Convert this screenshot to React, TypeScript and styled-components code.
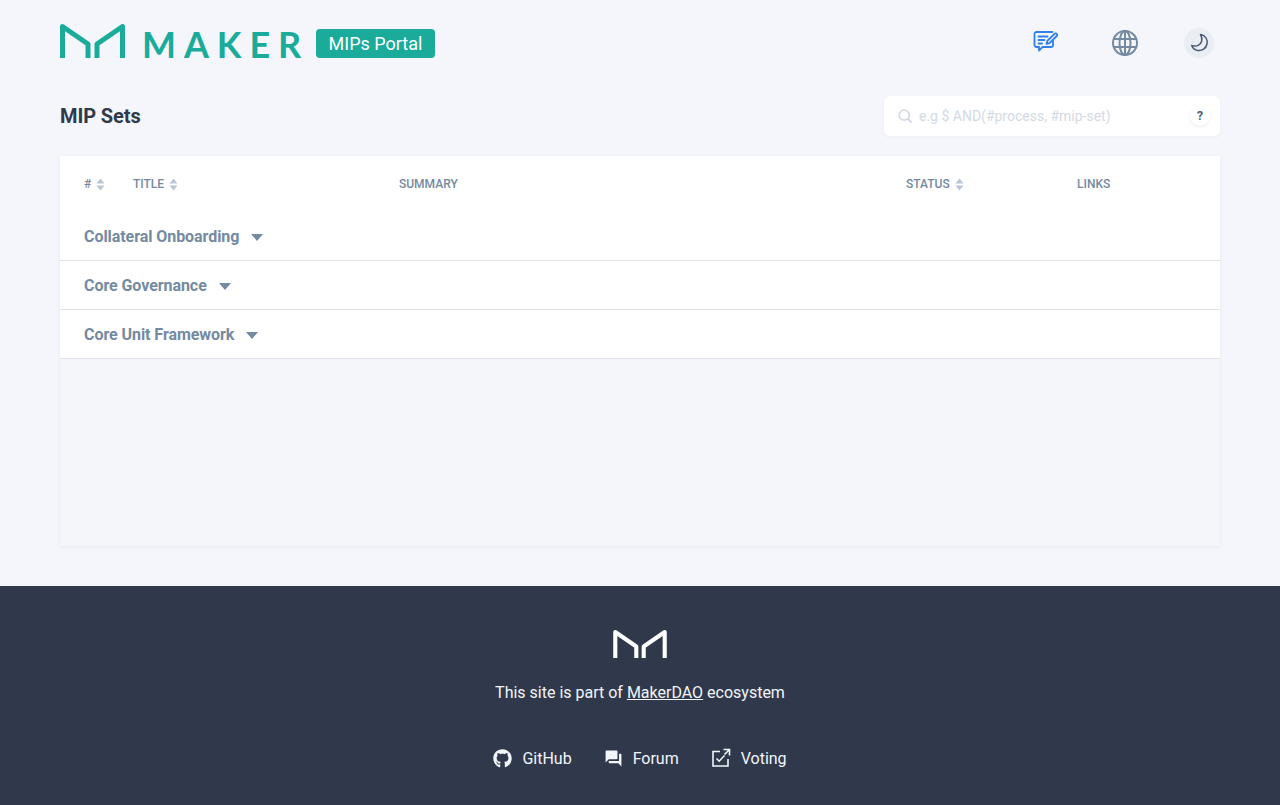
import React from 'react'
import styled, { createGlobalStyle } from 'styled-components'
import { FaGithub } from 'react-icons/fa'
import { MdForum } from 'react-icons/md'

const GlobalStyle = createGlobalStyle`
  html, body {
    margin: 0;
    padding: 0;
    background: #f4f6fb;
    font-family: Roboto, "Liberation Sans", sans-serif;
  }
  * { box-sizing: border-box; }
`

const Page = styled.div`
  width: 1280px;
  height: 805px;
  overflow: hidden;
  display: flex;
  flex-direction: column;
`

const Main = styled.main`
  height: 586px;
  padding: 24px 60px 40px;
  display: flex;
  flex-direction: column;
`

const Header = styled.header`
  height: 34px;
  display: flex;
  align-items: center;
  justify-content: space-between;
`

const Brand = styled.div`
  display: flex;
  align-items: center;
`

const WordMark = styled.span`
  width: 174px;
  margin-left: 17px;
  padding-top: 3px;
  height: 34px;
  font-family: Lato, sans-serif;
  font-size: 36px;
  line-height: 34px;
  font-weight: 700;
  letter-spacing: 7.9px;
  white-space: nowrap;
  color: #1aab9b;
`

const PortalBadge = styled.span`
  margin-top: 5px;
  width: 119px;
  height: 29px;
  border-radius: 4px;
  background: #1aab9b;
  color: #fff;
  font-size: 18px;
  line-height: 29px;
  text-align: center;
`

const HeaderIcons = styled.div`
  display: flex;
  align-items: center;
  margin-top: 4px;
  margin-right: 6px;
`

const IconSlot = styled.div<{ $width: number; $offset?: number; $round?: boolean }>`
  width: ${p => p.$width}px;
  height: 30px;
  margin-left: ${p => p.$offset ?? 0}px;
  display: flex;
  align-items: center;
  justify-content: center;
  border-radius: 50%;
  background: ${p => (p.$round ? '#e9edf4' : 'transparent')};
`

const TitleRow = styled.div`
  margin-top: 38px;
  height: 40px;
  display: flex;
  align-items: center;
  justify-content: space-between;
`

const Title = styled.h1`
  margin: 0;
  font-size: 20px;
  font-weight: 700;
  color: #2f3a4d;
  letter-spacing: -0.1px;
`

const SearchBox = styled.div`
  width: 336px;
  height: 40px;
  padding: 0 10px 0 14px;
  display: flex;
  align-items: center;
  background: #fff;
  border-radius: 6px;
  box-shadow: 0 1px 3px rgba(190, 200, 220, 0.18);
`

const Placeholder = styled.span`
  flex: 1;
  margin-left: 7px;
  font-size: 14px;
  color: #d3dae5;
`

const HelpButton = styled.span`
  width: 20px;
  height: 20px;
  border-radius: 50%;
  box-shadow: 0 1px 3px rgba(190, 200, 220, 0.35);
  font-size: 12px;
  font-weight: 700;
  line-height: 20px;
  text-align: center;
  color: #4a5872;
`

const TableCard = styled.section`
  margin-top: 20px;
  height: 390px;
  background: #f5f6fa;
  box-shadow: 0 1px 4px rgba(190, 200, 220, 0.3);
  border-radius: 2px;
`

const HeadRow = styled.div`
  height: 56px;
  padding-left: 24px;
  display: grid;
  grid-template-columns: 49px 266px 507px 171px 1fr;
  align-items: center;
  background: #fff;
`

const HeadCell = styled.div`
  display: flex;
  align-items: center;
  gap: 5px;
  font-size: 12px;
  font-weight: 500;
  color: #748aa1;
`

const GroupRow = styled.div`
  height: 49px;
  padding: 1px 24px 0;
  display: flex;
  align-items: center;
  gap: 12px;
  background: #fff;
  border-bottom: 1px solid #dfe2e6;
`

const GroupName = styled.span`
  font-size: 16px;
  font-weight: 700;
  letter-spacing: -0.06px;
  color: #748aa1;
`

const Caret = styled.span`
  width: 0;
  height: 0;
  margin-top: 1px;
  border-left: 6px solid transparent;
  border-right: 6px solid transparent;
  border-top: 7px solid #748aa1;
`

const Footer = styled.footer`
  height: 219px;
  padding-top: 44px;
  display: flex;
  flex-direction: column;
  align-items: center;
  background: #30394c;
  color: #fff;
`

const FooterNote = styled.p`
  margin: 25px 0 0;
  height: 20px;
  font-size: 16px;
  line-height: 20px;
  color: #f2f5fa;

  a {
    color: inherit;
    text-decoration: underline;
  }
`

const FooterLinks = styled.nav`
  margin-top: 45px;
  display: flex;
  align-items: center;
  gap: 32px;
`

const FooterLink = styled.a`
  display: flex;
  align-items: center;
  gap: 10px;
  font-size: 16px;
  color: #f2f5fa;
`

const MakerMark = ({ width, height, color }: { width: number; height: number; color: string }) => (
  <svg width={width} height={height} viewBox="0 0 65 34" fill="none">
    <path
      d="M2.500 34V2.500L28 20V34M37 34V20L62.500 2.500V34"
      stroke={color}
      strokeWidth="5"
      strokeLinejoin="round"
    />
  </svg>
)

const SortIcon = () => (
  <svg width="9" height="13" viewBox="0 0 9 13" fill="#b8c5d3">
    <path d="M4.500 0.500L8.500 5.500H0.500Z" />
    <path d="M4.500 12.500L8.500 7.500H0.500Z" />
  </svg>
)

const NoteIcon = () => (
  <svg width="26" height="24" viewBox="0 1 26 24" fill="none" stroke="#2f80ed" strokeWidth="1.800" strokeLinecap="round" strokeLinejoin="round">
    <path d="M20 10V15a2 2 0 0 1-2 2H9.500L6 20.500V17H3.500a2 2 0 0 1-2-2V4a2 2 0 0 1 2-2H19.500" />
    <path d="M5.500 6.500h9M5.500 10h6M5.500 13.500h3.500" />
    <path d="M13.500 14l.8-3L21.500 3.800a1.400 1.400 0 0 1 2.200 2.200L16.500 13.200Z" />
  </svg>
)

const GlobeIcon = () => (
  <svg width="28" height="28" viewBox="0 0 28 28" fill="none" stroke="#748aa1" strokeWidth="2">
    <circle cx="14" cy="14" r="12" />
    <ellipse cx="14" cy="14" rx="5.500" ry="12" />
    <path d="M14 2v24M3 10h22M3 18h22" />
  </svg>
)

const MoonIcon = () => (
  <svg width="20" height="20" viewBox="0 0 20 20" fill="none" stroke="#4a5872" strokeWidth="1.500" strokeLinejoin="round">
    <path d="M11.500 1.500C16.500 2.500 18.800 6.500 18 11c-.9 4.600-5.200 7.200-9.300 6.400-2.800-.5-5-2.400-6-5 5 2 9-.6 9.900-3.900.6-2.400.2-4.900-1.100-7Z" />
  </svg>
)

const SearchIcon = () => (
  <svg width="14" height="14" viewBox="0 0 14 14" fill="none" stroke="#d3dae5" strokeWidth="1.800" strokeLinecap="round">
    <circle cx="6.200" cy="6.200" r="5" />
    <path d="M10 10l3 3" />
  </svg>
)

const VotingIcon = () => (
  <svg width="20" height="20" viewBox="0 0 20 20" fill="none" stroke="#f2f5fa" strokeWidth="1.600">
    <path d="M9 3.500H2V18h15v-7" />
    <path d="M12.500 1.500h6v6M18 2l-4.500 4.500" />
    <path d="M5.500 10.500l2.700 2.700L13.500 7.500" />
  </svg>
)

const GROUPS = ['Collateral Onboarding', 'Core Governance', 'Core Unit Framework']

export default function App() {
  return (
    <Page>
      <GlobalStyle />
      <Main>
        <Header>
          <Brand>
            <MakerMark width={65} height={34} color="#1aab9b" />
            <WordMark>MAKER</WordMark>
            <PortalBadge>MIPs Portal</PortalBadge>
          </Brand>
          <HeaderIcons>
            <IconSlot $width={26}><NoteIcon /></IconSlot>
            <IconSlot $width={28} $offset={52}><GlobeIcon /></IconSlot>
            <IconSlot $width={30} $offset={45} $round><MoonIcon /></IconSlot>
          </HeaderIcons>
        </Header>

        <TitleRow>
          <Title>MIP Sets</Title>
          <SearchBox>
            <SearchIcon />
            <Placeholder>e.g $ AND(#process, #mip-set)</Placeholder>
            <HelpButton>?</HelpButton>
          </SearchBox>
        </TitleRow>

        <TableCard>
          <HeadRow>
            <HeadCell># <SortIcon /></HeadCell>
            <HeadCell>TITLE <SortIcon /></HeadCell>
            <HeadCell>SUMMARY</HeadCell>
            <HeadCell>STATUS <SortIcon /></HeadCell>
            <HeadCell>LINKS</HeadCell>
          </HeadRow>
          {GROUPS.map(name => (
            <GroupRow key={name}>
              <GroupName>{name}</GroupName>
              <Caret />
            </GroupRow>
          ))}
        </TableCard>
      </Main>

      <Footer>
        <MakerMark width={54} height={28} color="#ffffff" />
        <FooterNote>
          This site is part of <a href="#">MakerDAO</a> ecosystem
        </FooterNote>
        <FooterLinks>
          <FooterLink><FaGithub size={19} /> GitHub</FooterLink>
          <FooterLink><MdForum size={19} /> Forum</FooterLink>
          <FooterLink><VotingIcon /> Voting</FooterLink>
        </FooterLinks>
      </Footer>
    </Page>
  )
}
